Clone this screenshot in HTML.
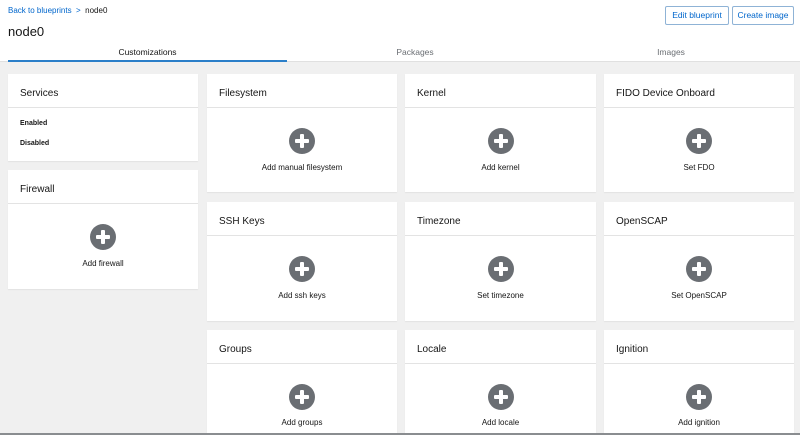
<!DOCTYPE html>
<html><head><style>
*{margin:0;padding:0;box-sizing:border-box}
html,body{width:800px;height:435px;overflow:hidden}
body{background:#f0f0f0;font-family:"Liberation Sans",sans-serif;color:#151515;position:relative}
.top{position:absolute;left:0;top:0;width:800px;height:62px;background:#fff;border-bottom:1px solid #e0e0e0}
.bc{position:absolute;left:8px;top:6px;font-size:8px;color:#06c}
.bc span{color:#151515}
h1{position:absolute;left:8px;top:24px;font-size:13px;font-weight:normal}
.btn{position:absolute;top:6px;height:19px;border:1px solid #8fb3d6;border-radius:2px;font-size:8.5px;color:#06c;text-align:center;line-height:17px}
.tab{position:absolute;top:47px;font-size:8.5px;color:#6a6e73;text-align:center}
.card{position:absolute;background:#fff;box-shadow:0 1px 1px rgba(0,0,0,.06)}
.hd{height:34px;border-bottom:1px solid #e3e3e3;font-size:10px;padding:14px 0 0 12px}
.ic{position:absolute;left:50%;margin-left:-13px;width:26px;height:26px;border-radius:50%;background:#6a6e73}
.ic:before{content:"";position:absolute;left:6px;top:11px;width:14px;height:4px;background:#fff;border-radius:1px}
.ic:after{content:"";position:absolute;left:11px;top:6px;width:4px;height:14px;background:#fff;border-radius:1px}
.lb{position:absolute;left:0;right:0;text-align:center;font-size:8px}
</style></head><body>
<div class="top">
<div class="bc">Back to blueprints &nbsp;&gt;&nbsp; <span>node0</span></div>
<h1>node0</h1>
<div class="btn" style="left:665px;width:64px">Edit blueprint</div>
<div class="btn" style="left:732px;width:62px">Create image</div>
<div class="tab" style="left:8px;width:279px;color:#151515">Customizations</div>
<div style="position:absolute;left:8px;top:60px;width:279px;height:2px;background:#2b7fc9"></div>
<div class="tab" style="left:287px;width:256px">Packages</div>
<div class="tab" style="left:543px;width:256px">Images</div>
</div>
<div class="card" style="left:8px;top:74px;width:190px;height:87px"><div class="hd">Services</div>
<div style="position:absolute;left:12px;top:46px;font-size:7px;font-weight:bold">Enabled</div>
<div style="position:absolute;left:12px;top:66px;font-size:7px;font-weight:bold">Disabled</div></div>
<div class="card" style="left:8px;top:170px;width:190px;height:119px"><div class="hd">Firewall</div><div class="ic" style="top:54px"></div><div class="lb" style="top:89px">Add firewall</div></div>

<div class="card" style="left:207px;top:74px;width:190px;height:118px"><div class="hd">Filesystem</div><div class="ic" style="top:54px"></div><div class="lb" style="top:89px">Add manual filesystem</div></div>
<div class="card" style="left:405px;top:74px;width:191px;height:118px"><div class="hd">Kernel</div><div class="ic" style="top:54px"></div><div class="lb" style="top:89px">Add kernel</div></div>
<div class="card" style="left:604px;top:74px;width:190px;height:118px"><div class="hd">FIDO Device Onboard</div><div class="ic" style="top:54px"></div><div class="lb" style="top:89px">Set FDO</div></div>

<div class="card" style="left:207px;top:202px;width:190px;height:119px"><div class="hd">SSH Keys</div><div class="ic" style="top:54px"></div><div class="lb" style="top:89px">Add ssh keys</div></div>
<div class="card" style="left:405px;top:202px;width:191px;height:119px"><div class="hd">Timezone</div><div class="ic" style="top:54px"></div><div class="lb" style="top:89px">Set timezone</div></div>
<div class="card" style="left:604px;top:202px;width:190px;height:119px"><div class="hd">OpenSCAP</div><div class="ic" style="top:54px"></div><div class="lb" style="top:89px">Set OpenSCAP</div></div>

<div class="card" style="left:207px;top:330px;width:190px;height:110px"><div class="hd">Groups</div><div class="ic" style="top:54px"></div><div class="lb" style="top:88px">Add groups</div></div>
<div class="card" style="left:405px;top:330px;width:191px;height:110px"><div class="hd">Locale</div><div class="ic" style="top:54px"></div><div class="lb" style="top:88px">Add locale</div></div>
<div class="card" style="left:604px;top:330px;width:190px;height:110px"><div class="hd">Ignition</div><div class="ic" style="top:54px"></div><div class="lb" style="top:88px">Add ignition</div></div>
<div style="position:absolute;left:0;top:433px;width:800px;height:2px;background:#8a8d90"></div>
</body></html>
